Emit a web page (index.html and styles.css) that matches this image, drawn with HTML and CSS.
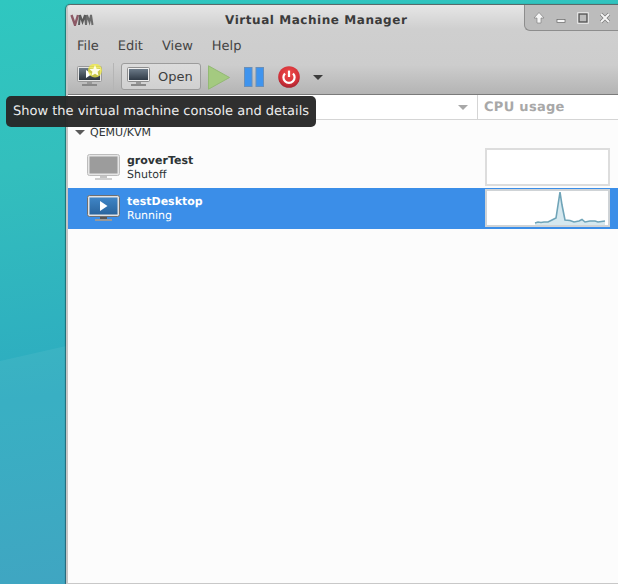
FILE: index.html
```html
<!DOCTYPE html>
<html lang="en">
<head>
    <meta charset="UTF-8">
    <title>Virtual Machine Manager</title>
    <link rel="stylesheet" href="styles.css">
</head>
<body>
    <div class="desktop">
        <svg class="wallpaper" width="618" height="584" viewBox="0 0 618 584">
            <polygon points="0,361 66,346 66,584 0,584" fill="#ffffff" opacity="0.06"/>
        </svg>
        <div class="window">
            <div class="chrome">
                <header class="titlebar">
                    <svg class="vmm-logo" width="24" height="12" viewBox="0 0 24 12">
                        <path d="M1.5 1 L5 11 L8 1" fill="none" stroke="#8d5a66" stroke-width="2.4"/>
                        <path d="M9 11 L10 1 L12.5 8 L15 1 L16 11" fill="none" stroke="#5a5a5a" stroke-width="2"/>
                        <path d="M16 11 L17 1 L19.5 8 L21 1 L22.5 11" fill="none" stroke="#6b6b6b" stroke-width="2"/>
                    </svg>
                    <span class="title">Virtual Machine Manager</span>
                    <div class="wm-buttons">
                        <svg width="12" height="12" viewBox="0 0 12 12"><path d="M6 0.5 L11 6 H8 V11 H4 V6 H1 Z" fill="#f6f6f6" stroke="#777" stroke-width="0.6"/></svg>
                        <svg width="12" height="12" viewBox="0 0 12 12"><rect x="2" y="7.5" width="8" height="3" fill="#f6f6f6" stroke="#666" stroke-width="0.7"/></svg>
                        <svg width="12" height="12" viewBox="0 0 12 12"><rect x="2" y="2" width="8" height="8" fill="none" stroke="#555" stroke-width="1.4"/><rect x="0.7" y="0.7" width="10.6" height="10.6" fill="none" stroke="#eee" stroke-width="0.9"/></svg>
                        <svg width="12" height="12" viewBox="0 0 12 12"><path d="M2 2 L10 10 M10 2 L2 10" stroke="#777" stroke-width="3.2"/><path d="M2 2 L10 10 M10 2 L2 10" stroke="#f6f6f6" stroke-width="2"/></svg>
                    </div>
                </header>
                <nav class="menubar">
                    <span>File</span>
                    <span>Edit</span>
                    <span>View</span>
                    <span>Help</span>
                </nav>
                <div class="toolbar">
                    <button class="tool">
                        <svg width="26" height="26" viewBox="0 0 26 26">
                            <defs>
                                <linearGradient id="screenNew" x1="0" y1="0" x2="0" y2="1">
                                    <stop offset="0" stop-color="#6e7c88"/>
                                    <stop offset="1" stop-color="#2a333c"/>
                                </linearGradient>
                            </defs>
                            <rect x="0.5" y="2.5" width="24" height="15" rx="1" fill="#e4e4e4" stroke="#999"/>
                            <rect x="2" y="4" width="21" height="12" fill="url(#screenNew)"/>
                            <path d="M9 6 L15 10 L9 14 Z" fill="#fff"/>
                            <rect x="10" y="18" width="5" height="2" fill="#999"/>
                            <rect x="5" y="20" width="15" height="2" fill="#888"/>
                            <circle cx="18" cy="6.5" r="7" fill="#f2ec40" opacity="0.75"/>
                            <path d="M18 1 L19.6 4.7 L23.6 5.1 L20.6 7.8 L21.5 11.7 L18 9.7 L14.5 11.7 L15.4 7.8 L12.4 5.1 L16.4 4.7 Z" fill="#fffde6"/>
                        </svg>
                    </button>
                    <span class="tool-sep"></span>
                    <button class="open-btn">
                        <svg width="23" height="20" viewBox="0 0 23 20">
                            <defs>
                                <linearGradient id="screenOpen" x1="0" y1="0" x2="0" y2="1">
                                    <stop offset="0" stop-color="#6c7a88"/>
                                    <stop offset="1" stop-color="#2f3a46"/>
                                </linearGradient>
                            </defs>
                            <rect x="0.5" y="0.5" width="22" height="14" rx="1" fill="#eeeeee" stroke="#8f8f8f"/>
                            <rect x="2" y="2" width="19" height="11" fill="url(#screenOpen)"/>
                            <rect x="9" y="15" width="5" height="2" fill="#999"/>
                            <rect x="4" y="17" width="15" height="2" fill="#8a8a8a"/>
                        </svg>
                        <span>Open</span>
                    </button>
                    <svg class="icon-play" width="22" height="25" viewBox="0 0 22 25"><path d="M0.5 0.8 L21.5 12.5 L0.5 24.2 Z" fill="#a4ca80" stroke="#93b974"/></svg>
                    <svg class="icon-pause" width="20" height="20" viewBox="0 0 20 20">
                        <rect x="0.5" y="0.5" width="7.5" height="19" fill="#3f94ee" stroke="#6a8fb8"/>
                        <rect x="12" y="0.5" width="7.5" height="19" fill="#3f94ee" stroke="#6a8fb8"/>
                    </svg>
                    <svg class="icon-power" width="22" height="22" viewBox="0 0 22 22">
                        <defs>
                            <radialGradient id="powerFill" cx="0.5" cy="0.35" r="0.65">
                                <stop offset="0" stop-color="#ee4a48"/>
                                <stop offset="0.7" stop-color="#d3323a"/>
                                <stop offset="1" stop-color="#a5222e"/>
                            </radialGradient>
                        </defs>
                        <circle cx="11" cy="11" r="10.8" fill="url(#powerFill)"/>
                        <path d="M7 7.4 A5.6 5.6 0 1 0 15 7.4" fill="none" stroke="#fff" stroke-width="2.2"/>
                        <path d="M11 4.6 V11" stroke="#fff" stroke-width="2.2"/>
                    </svg>
                    <span class="arrow-down"></span>
                </div>
            </div>
            <div class="list-head">
                <div class="col-name">
                    <span>Name</span>
                    <span class="arrow-sort"></span>
                </div>
                <div class="col-cpu">CPU usage</div>
            </div>
            <div class="list">
                <div class="group">
                    <span class="arrow-group"></span>
                    <span>QEMU/KVM</span>
                </div>
                <div class="vm-row">
                    <svg class="vm-icon" width="33" height="27" viewBox="0 0 33 27">
                        <rect x="0.5" y="0.5" width="32" height="21" rx="2" fill="#e6e6e6" stroke="#bcbcbc"/>
                        <rect x="2.5" y="2.5" width="28" height="17" fill="#9c9c9c"/>
                        <rect x="13" y="22" width="7" height="2" fill="#c4c4c4"/>
                        <rect x="8" y="24" width="17" height="2" fill="#cfcfcf"/>
                    </svg>
                    <div class="vm-text">
                        <strong>groverTest</strong>
                        <span>Shutoff</span>
                    </div>
                    <div class="cpu-graph"></div>
                </div>
                <div class="vm-row selected">
                    <svg class="vm-icon" width="33" height="27" viewBox="0 0 33 27">
                        <defs>
                            <linearGradient id="screenRun" x1="0" y1="0" x2="0" y2="1">
                                <stop offset="0" stop-color="#3f85c6"/>
                                <stop offset="1" stop-color="#2a659e"/>
                            </linearGradient>
                        </defs>
                        <rect x="0.5" y="0.5" width="32" height="21" rx="2" fill="#e2e2e2" stroke="#6f6f6f"/>
                        <rect x="2.5" y="2.5" width="28" height="17" fill="url(#screenRun)"/>
                        <path d="M13 6 L20.5 11 L13 16 Z" fill="#fff"/>
                        <rect x="13" y="22" width="7" height="2" fill="#555"/>
                        <rect x="8" y="24" width="17" height="2" fill="#999"/>
                    </svg>
                    <div class="vm-text">
                        <strong>testDesktop</strong>
                        <span>Running</span>
                    </div>
                    <div class="cpu-graph">
                        <svg width="121" height="34" viewBox="0 0 121 34">
                            <path d="M48 32 L51 31 L54 31.5 L57 31 L61 31 L65 29 L69 27 L71 14 L73 1 L75 14 L78 29 L83 29.5 L87 31 L92 30 L95 28.5 L98 31 L103 30 L108 30 L111 31 L118 30 V34 H48 Z" fill="#d5e8ef"/>
                            <path d="M48 32 L51 31 L54 31.5 L57 31 L61 31 L65 29 L69 27 L71 14 L73 1 L75 14 L78 29 L83 29.5 L87 31 L92 30 L95 28.5 L98 31 L103 30 L108 30 L111 31 L118 30" fill="none" stroke="#6fa4b8" stroke-width="1.6"/>
                        </svg>
                    </div>
                </div>
            </div>
        </div>
        <div class="tooltip">Show the virtual machine console and details</div>
    </div>
</body>
</html>
```

FILE: styles.css
```css
* {
    margin: 0;
    padding: 0;
    box-sizing: border-box;
}

body {
    width: 618px;
    height: 584px;
    overflow: hidden;
    font-family: "DejaVu Sans", sans-serif;
    text-rendering: geometricPrecision;
}

.desktop {
    position: relative;
    width: 618px;
    height: 584px;
    overflow: hidden;
    background: linear-gradient(172deg, #2fc7c0 0%, #33bfbd 25%, #2dabc0 60%, #369cbe 100%);
}

.wallpaper {
    position: absolute;
    left: 0;
    top: 0;
}

.window {
    position: absolute;
    left: 66px;
    top: 4px;
    width: 560px;
    height: 580px;
    display: flex;
    flex-direction: column;
    background-color: #fcfcfc;
    border-top: 1px solid #5a6a6a;
    border-left: 2px solid #c4c4c4;
    border-bottom: 1px solid #c8c8c8;
    border-top-left-radius: 5px;
    box-shadow: -1px 0 1px rgba(0, 0, 0, 0.4);
}

.chrome {
    background: linear-gradient(#e6e6e6 0, #cfcfcf 24px, #cdcdcd 60px, #b4b4b4 89px);
    border-bottom: 1px solid #7a7a7a;
    border-top-left-radius: 4px;
}

.titlebar {
    position: relative;
    height: 27px;
    display: flex;
    align-items: center;
    padding: 2px 0 0 2px;
}

.vmm-logo {
    flex-shrink: 0;
}

.title {
    margin-left: 131px;
    font-size: 12px;
    font-weight: bold;
    letter-spacing: 0.55px;
    color: #3b3b3b;
}

.wm-buttons {
    position: absolute;
    left: 456px;
    top: 0;
    width: 110px;
    height: 26px;
    display: flex;
    align-items: center;
    gap: 10px;
    padding: 0 0 0 8px;
    background-color: #bcbcbc;
    border-left: 1px solid #8d8d8d;
    border-bottom: 1px solid #8d8d8d;
    border-bottom-left-radius: 6px;
}

.menubar {
    height: 27px;
    display: flex;
    align-items: center;
    gap: 19px;
    padding: 2px 0 0 9px;
    font-size: 13px;
    color: #444444;
}

.toolbar {
    height: 35px;
    display: flex;
    align-items: center;
    padding-left: 9px;
}

.tool {
    border: none;
    background: none;
    width: 26px;
    height: 26px;
}

.tool-sep {
    width: 1px;
    height: 28px;
    margin: 0 7px 0 10px;
    background-color: #b5b5b5;
}

.open-btn {
    width: 80px;
    height: 27px;
    display: flex;
    align-items: center;
    gap: 8px;
    padding-left: 5px;
    border: 1px solid #9c9c9c;
    border-radius: 3px;
    background: linear-gradient(#dcdcdc, #d0d0d0);
    font-family: inherit;
    font-size: 13px;
    color: #3e3e3e;
}

.icon-play {
    margin: 1px 0 0 7px;
}

.icon-pause {
    margin-left: 14px;
}

.icon-power {
    margin-left: 14px;
}

.arrow-down {
    margin: 2px 0 0 13px;
    border-left: 5px solid transparent;
    border-right: 5px solid transparent;
    border-top: 5px solid #3c3c3c;
}

.list-head {
    height: 25px;
    display: flex;
    flex-shrink: 0;
    background-color: #ffffff;
    border-bottom: 1px solid #d5d5d5;
    font-size: 13px;
    font-weight: bold;
    color: #a8a8a8;
}

.col-name {
    width: 410px;
    display: flex;
    align-items: center;
    justify-content: space-between;
    padding: 0 9px 0 8px;
    border-right: 1px solid #d5d5d5;
}

.arrow-sort {
    border-left: 5px solid transparent;
    border-right: 5px solid transparent;
    border-top: 5px solid #a8a8a8;
}

.col-cpu {
    display: flex;
    align-items: center;
    padding-left: 6px;
    letter-spacing: 0.3px;
}

.list {
    flex: 1;
    background-color: #fcfcfc;
}

.group {
    height: 27px;
    display: flex;
    align-items: center;
    gap: 5px;
    padding: 0 0 2px 7px;
    font-size: 11px;
    color: #2e3436;
}

.arrow-group {
    border-left: 5px solid transparent;
    border-right: 5px solid transparent;
    border-top: 5px solid #5a5a5a;
}

.vm-row {
    height: 41px;
    display: flex;
    align-items: center;
    padding-left: 19px;
    font-size: 11px;
    color: #2e3436;
}

.vm-row.selected {
    background-color: #3b8ee8;
    color: #ffffff;
}

.vm-icon {
    flex-shrink: 0;
}

.vm-text {
    width: 365px;
    display: flex;
    flex-direction: column;
    gap: 1px;
    padding-left: 7px;
}

.cpu-graph {
    width: 125px;
    height: 38px;
    margin-bottom: 1px;
    flex-shrink: 0;
    border: 2px solid #dddddd;
    background-color: #ffffff;
}

.cpu-graph svg {
    display: block;
}

.selected .cpu-graph {
    border-color: #cfd3d6;
}

.tooltip {
    position: absolute;
    left: 6px;
    top: 96px;
    width: 310px;
    height: 31px;
    display: flex;
    align-items: center;
    padding-left: 7px;
    background-color: rgba(38, 38, 38, 0.96);
    border-radius: 5px;
    font-size: 13px;
    color: #ececec;
}
```
